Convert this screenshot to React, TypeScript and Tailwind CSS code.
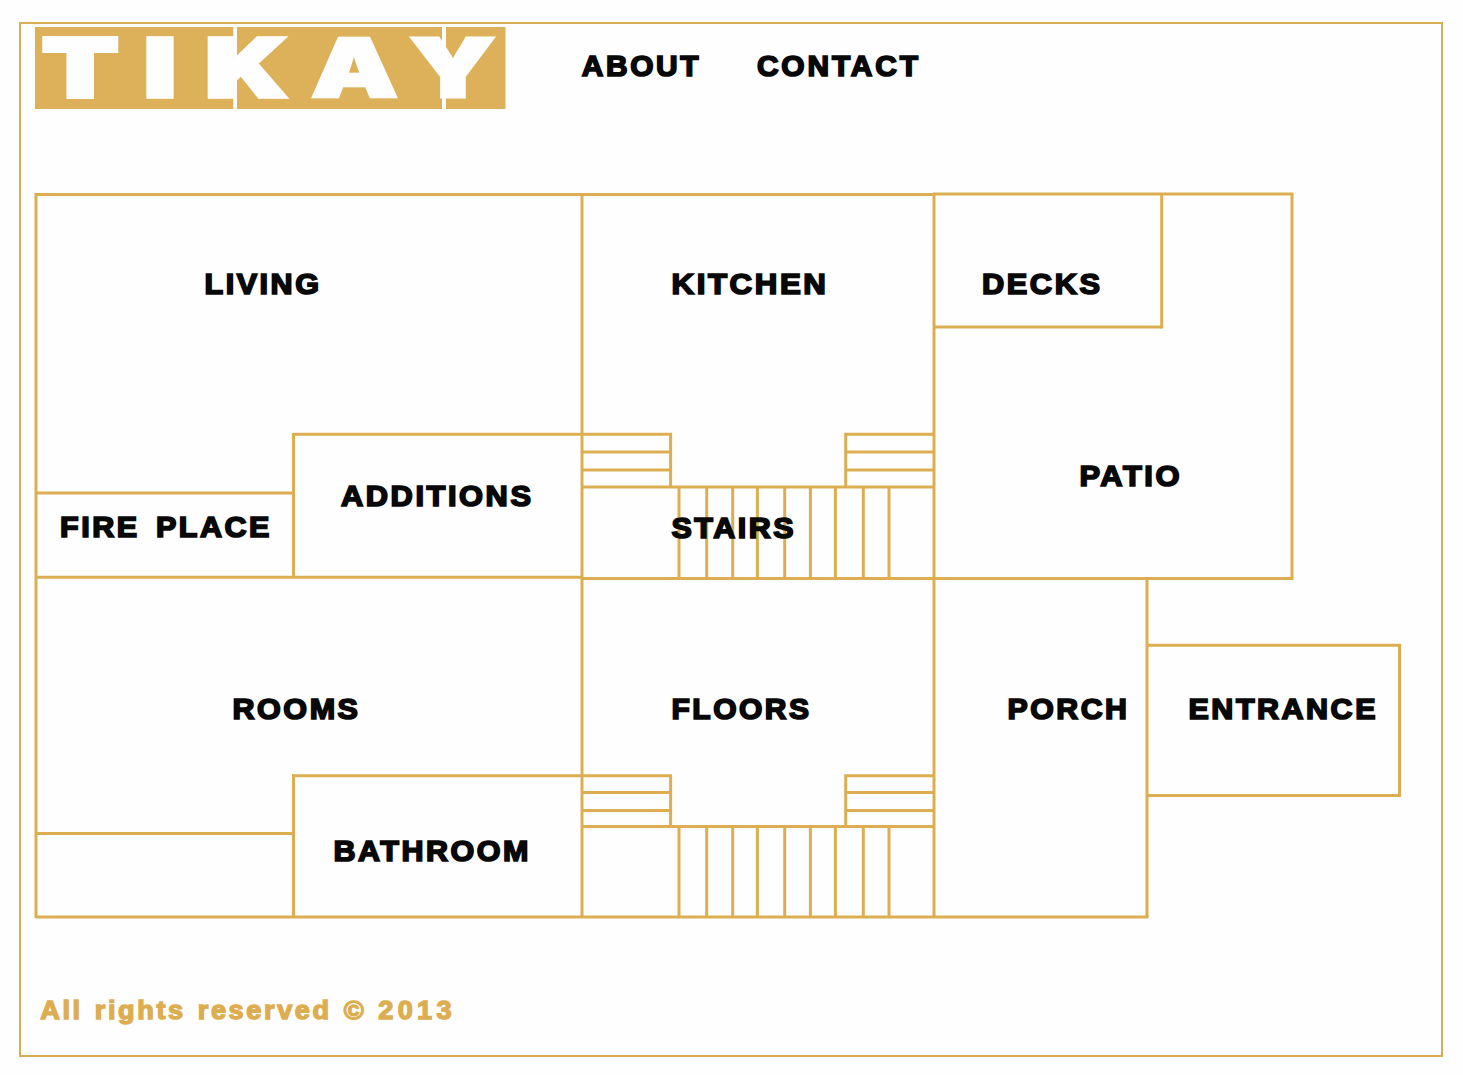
import React from 'react';

// x1, y1, x2, y2
const walls = [
  // outer shell
  [36, 194.5, 934, 194.5],
  [933, 194, 1293.3, 194],
  [36, 193, 36, 918],
  [36, 577.3, 582, 577.3],
  [582, 578.5, 1293.5, 578.5],
  [36, 917, 1148.5, 917],
  [582, 194, 582, 917],
  [934, 193, 934, 917],
  // decks and patio
  [1161.7, 194, 1161.7, 328.5],
  [934, 327, 1162, 327],
  [1292, 194, 1292, 578],
  // fire place and additions
  [36, 493, 293.5, 493],
  [293.5, 433, 293.5, 577],
  [293.5, 434.3, 672, 434.3],
  // lower left rooms
  [36, 833.5, 293.5, 833.5],
  [293.5, 774.3, 293.5, 917],
  [293.5, 775.7, 672, 775.7],
  // porch and entrance
  [1147, 578, 1147, 917],
  [1147, 645.3, 1401, 645.3],
  [1399.5, 645, 1399.5, 797],
  [1147, 795.6, 1401, 795.6],
];

const stairs = [
  { top: 434.3, treads: [452, 470], landing: 487, bottom: 578 },
  { top: 775.7, treads: [792.4, 810.4], landing: 826.4, bottom: 917 },
];

const steps = [679, 706.7, 732.7, 757.4, 784.7, 810.4, 835.4, 863.3, 889];

const rooms = [
  { name: 'LIVING', x: 204.5, y: 294, width: 117 },
  { name: 'KITCHEN', x: 671.5, y: 294, width: 157 },
  { name: 'DECKS', x: 982, y: 294, width: 120.5 },
  { name: 'PATIO', x: 1079.5, y: 486.2, width: 102.5 },
  { name: 'ADDITIONS', x: 341, y: 506.2, width: 192.5 },
  { name: 'FIRE PLACE', x: 60, y: 537.4, width: 212 },
  { name: 'STAIRS', x: 671.5, y: 538, width: 124.5 },
  { name: 'ROOMS', x: 232.5, y: 719.2, width: 128 },
  { name: 'FLOORS', x: 671.5, y: 719.2, width: 140 },
  { name: 'PORCH', x: 1007.5, y: 719.2, width: 122 },
  { name: 'ENTRANCE', x: 1188.5, y: 719.2, width: 189.5 },
  { name: 'BATHROOM', x: 333.5, y: 861.4, width: 197.5 },
];

const letters = [
  { char: 'T', x: 42, width: 76.5, outline: 4 },
  { char: 'I', x: 143.5, width: 33, outline: 3.5 },
  { char: 'K', x: 205, width: 82.5, outline: 3.5 },
  { char: 'A', x: 311, width: 87, outline: 2.5 },
  { char: 'Y', x: 410, width: 85, outline: 3 },
];

const Logo: React.FC = () => (
  <svg viewBox="35 26.5 470.5 82" className="block h-[82px] w-[470.5px] shrink-0 overflow-visible">
    <rect x="35" y="26.5" width="470.5" height="82" fill="#dcb15a" />
    {letters.map((l) => (
      <text
        key={l.char}
        x={l.x}
        y="96"
        textLength={l.width}
        lengthAdjust="spacingAndGlyphs"
        strokeWidth={l.outline}
        className="fill-[#fefefe] stroke-[#fefefe] font-['Inter',sans-serif] text-[81px] font-black"
      >
        {l.char}
      </text>
    ))}
    <rect x="233.3" y="26" width="3.7" height="83" fill="#fefefe" />
    <rect x="442" y="26" width="4" height="83" fill="#fefefe" />
  </svg>
);

const FloorPlan: React.FC = () => (
  <svg viewBox="34 190 1370 730" className="block h-[730px] w-[1370px]">
    <g stroke="#dcae51" strokeWidth="3">
      {walls.map(([x1, y1, x2, y2], i) => (
        <line key={i} x1={x1} y1={y1} x2={x2} y2={y2} />
      ))}
      {stairs.map((s) => (
        <g key={s.top} fill="none">
          <path d={`M670.6 ${s.top}V${s.landing}M934 ${s.top}H845.7V${s.landing}`} />
          {s.treads.map((y) => (
            <path key={y} d={`M582 ${y}H670.6M845.7 ${y}H934`} />
          ))}
          <path d={`M582 ${s.landing}H934`} />
          {steps.map((x) => (
            <path key={x} d={`M${x} ${s.landing}V${s.bottom}`} />
          ))}
        </g>
      ))}
    </g>
    {rooms.map((r) => (
      <a key={r.name} href="#">
        <text
          x={r.x}
          y={r.y}
          textLength={r.width}
          lengthAdjust="spacingAndGlyphs"
          className="fill-[#080808] stroke-[#080808] stroke-[1.7] font-['Liberation_Sans',sans-serif] text-[29px] font-bold tracking-[2.4px] [word-spacing:5px]"
        >
          {r.name}
        </text>
      </a>
    ))}
  </svg>
);

const App: React.FC = () => {
  return (
    <div className="h-[1075px] w-[1463px] bg-[#fefefe] pt-[22px] pl-[19px] font-['Liberation_Sans',sans-serif] font-bold">
      <div className="flex h-[1035px] w-[1424px] flex-col border-2 border-[#d9ad55] pl-[13px]">
        <header className="flex pt-[2.5px] pl-[1px]">
          <Logo />
          <nav className="flex origin-left scale-x-[1.03] gap-[54px] pt-[21px] pl-[73.5px] text-[29px] leading-[36px] tracking-[2.6px] text-[#080808] [-webkit-text-stroke:1.7px_#080808]">
            <a href="#">ABOUT</a>
            <a href="#" className="tracking-[2.8px]">CONTACT</a>
          </nav>
        </header>
        <main className="pt-[81.5px]">
          <FloorPlan />
        </main>
        <footer className="origin-left scale-x-[1.043] self-start pt-[74px] pl-[6px] text-[26px] leading-[32px] tracking-[2.5px] whitespace-nowrap text-[#dcae51] [-webkit-text-stroke:1.4px_#dcae51] [word-spacing:1.8px]">
          All rights reserved © <span className="tracking-[4.1px]">2013</span>
        </footer>
      </div>
    </div>
  );
};

export default App;
